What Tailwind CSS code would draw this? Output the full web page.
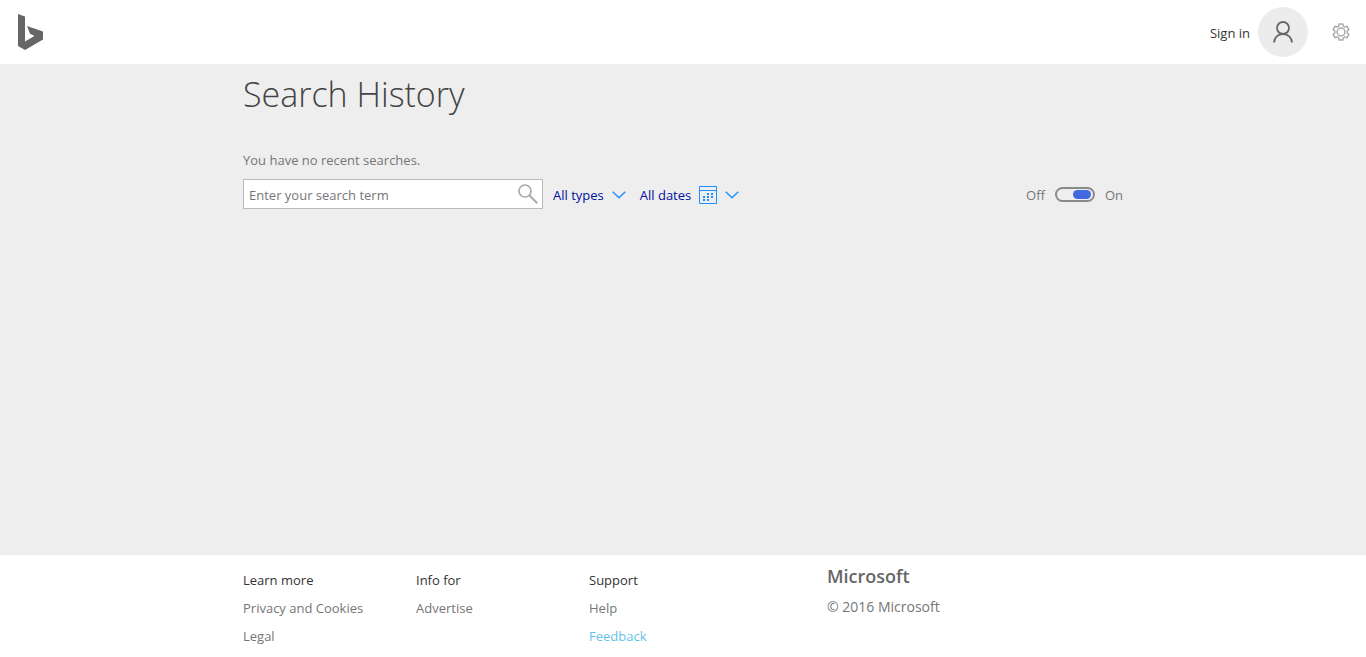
<!DOCTYPE html>
<html lang="en">
<head>
<meta charset="utf-8">
<meta name="viewport" content="width=device-width, initial-scale=1">
<title>Search History</title>
<script src="https://cdn.jsdelivr.net/npm/@tailwindcss/browser@4"></script>
</head>
<body class="flex min-h-screen flex-col bg-white font-['Open_Sans','Noto_Sans',sans-serif] text-[13px] leading-5 text-[#767676]">
<header class="flex h-16 items-center justify-between pr-4 pl-[18px]">
  <a href="#" aria-label="Bing home">
    <svg class="h-9 w-[25px]" viewBox="0 0 25 36" fill="#666"><path d="M0 0 7 2.500V27.500L16.500 22 12 19.800 9 12 25 17.500V25.500L7 36 0 32Z"/></svg>
  </a>
  <div class="flex items-center">
    <a href="#" class="flex items-center gap-2 text-[#333]">
      <span class="pt-0.5">Sign in</span>
      <span class="flex size-[50px] items-center justify-center rounded-full bg-[#ececec]">
        <svg class="h-[22px] w-5" viewBox="0 0 20 22" fill="none" stroke="#666" stroke-width="1.800"><circle cx="10" cy="7" r="6"/><path d="M1 21.500C1.300 16.500 5 13 10 13s8.700 3.500 9 8.500"/></svg>
      </span>
    </a>
    <button type="button" aria-label="Settings" class="ml-6">
      <svg class="size-[18px]" viewBox="0 0 18 18" fill="none" stroke="#aaa" stroke-width="1.500" stroke-linejoin="round"><path d="M7.200 1h3.600l.5 2.200 1.500.9 2.200-.8 1.900 3.200L15.200 8v2l1.700 1.500-1.900 3.200-2.200-.8-1.500.9-.5 2.200H7.200l-.5-2.200-1.500-.9-2.200.8-1.900-3.200L2.800 10V8L1.100 6.500 3 3.300l2.200.8 1.500-.9Z"/><circle cx="9" cy="9" r="3.900"/></svg>
    </button>
  </div>
</header>
<main class="flex-1 bg-[#eee]">
  <div class="mx-auto max-w-[880px]">
    <h1 class="pt-1.5 text-[34px] leading-[48px] font-light text-[#444]">Search History</h1>
    <p class="mt-8">You have no recent searches.</p>
    <div class="mt-[9px] flex items-center justify-between">
      <form class="flex items-center">
        <div class="flex h-[30px] w-[300px] items-center border border-[#bababa] bg-white pr-1 pl-[5px]">
          <input type="text" aria-label="Search your history" placeholder="Enter your search term" class="min-w-0 flex-1 pt-0.5 outline-none placeholder:text-[#767676]">
          <button type="submit" aria-label="Search">
            <svg class="size-5" viewBox="0 0 20 20" fill="none" stroke="#aaa"><circle cx="7" cy="7" r="6" stroke-width="1.700"/><path d="m11.300 11.300 8 8" stroke-width="2"/></svg>
          </button>
        </div>
        <button type="button" class="ml-2.5 flex items-center gap-2 pt-0.5 text-[#00109f]">All types
          <svg class="h-2 w-3.5" viewBox="0 0 14 8" fill="none" stroke="#1e90ff" stroke-width="1.400"><path d="m.7.7 6.300 6 6.300-6"/></svg>
        </button>
        <button type="button" class="ml-3.5 flex items-center gap-2 pt-0.5 text-[#00109f]">All dates
          <svg class="size-[18px]" viewBox="0 0 18 18" fill="none" stroke="#1e90ff"><path d="M.5.5h17v17H.5zM.5 4.500h17"/><path d="M12 7h2v2h-2zM8 7h2v2H8zM4 10h2v2H4zM8 10h2v2H8zM12 10h2v2h-2zM4 13h2v2H4zM8 13h2v2H8z" fill="#1e90ff" stroke="none"/></svg>
          <svg class="h-2 w-3.5" viewBox="0 0 14 8" fill="none" stroke="#1e90ff" stroke-width="1.400"><path d="m.7.7 6.300 6 6.300-6"/></svg>
        </button>
      </form>
      <div class="flex items-center gap-2.5">
        <label for="history" class="pt-0.5">Off</label>
        <input id="history" type="checkbox" role="switch" checked class="flex h-[15px] w-10 appearance-none items-center rounded-full border-2 border-[#8a8a8a] px-0.5 before:h-[9px] before:w-[18px] before:rounded-full before:bg-[#8a8a8a] checked:justify-end checked:before:bg-[#4169e1]">
        <label for="history" class="pt-0.5">On</label>
      </div>
    </div>
  </div>
</main>
<footer class="pt-[11px] leading-7">
  <div class="mx-auto flex max-w-[880px] pb-[7px]">
    <div class="w-[173px]">
      <h2 class="text-[#333]">Learn more</h2>
      <ul><li><a href="#">Privacy and Cookies</a></li><li><a href="#">Legal</a></li></ul>
    </div>
    <div class="w-[173px]">
      <h2 class="text-[#333]">Info for</h2>
      <ul><li><a href="#">Advertise</a></li></ul>
    </div>
    <div class="w-[238px]">
      <h2 class="text-[#333]">Support</h2>
      <ul><li><a href="#">Help</a></li><li><a href="#" class="text-[#66bfe8]">Feedback</a></li></ul>
    </div>
    <div>
      <div class="text-[18px] leading-5 font-semibold text-[#666]">Microsoft</div>
      <p class="mt-[7px] text-sm leading-7">© 2016 Microsoft</p>
    </div>
  </div>
</footer>
</body>
</html>
